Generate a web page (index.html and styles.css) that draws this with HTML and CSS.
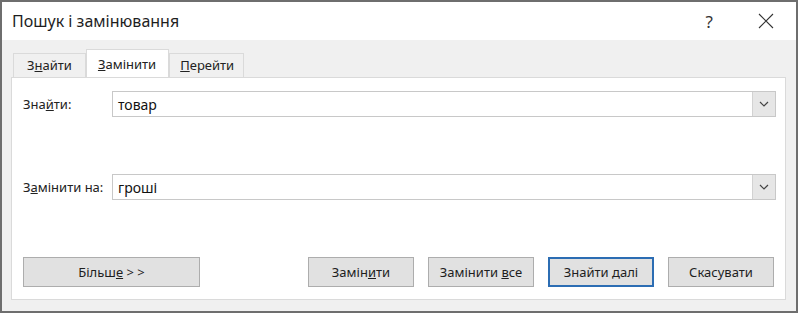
FILE: index.html
```html
<!DOCTYPE html>
<html lang="uk">
<head>
  <meta charset="UTF-8">
  <title>Пошук і замінювання</title>
  <link rel="stylesheet" href="styles.css">
</head>
<body>
  <div class="window">
    <!-- title bar -->
    <div class="titlebar">
      <div class="title">Пошук і замінювання</div>
      <div class="title-actions">
        <span class="help">?</span>
        <svg class="close" width="16" height="16" viewBox="0 0 16 16">
          <path d="M1 1 L15 15 M15 1 L1 15" stroke="#333" stroke-width="1.1" fill="none"/>
        </svg>
      </div>
    </div>

    <div class="content">
      <!-- tabs -->
      <div class="tabs">
        <div class="tab">З<u>н</u>айти</div>
        <div class="tab active"><u>З</u>амінити</div>
        <div class="tab"><u>П</u>ерейти</div>
      </div>

      <div class="panel">
        <div class="field">
          <label class="field-label">Зна<u>й</u>ти:</label>
          <div class="combo">
            <span class="combo-text">товар</span>
            <span class="combo-btn">
              <svg width="10" height="6" viewBox="0 0 10 6"><path d="M1 1 L5 5 L9 1" stroke="#444" stroke-width="1.2" fill="none"/></svg>
            </span>
          </div>
        </div>

        <div class="field">
          <label class="field-label">З<u>а</u>мінити на:</label>
          <div class="combo">
            <span class="combo-text">гроші</span>
            <span class="combo-btn">
              <svg width="10" height="6" viewBox="0 0 10 6"><path d="M1 1 L5 5 L9 1" stroke="#444" stroke-width="1.2" fill="none"/></svg>
            </span>
          </div>
        </div>

        <div class="buttons">
          <button class="btn btn-more">Більш<u>е</u> &gt; &gt;</button>
          <div class="btn-group">
            <button class="btn">Замін<u>и</u>ти</button>
            <button class="btn">Замінити <u>в</u>се</button>
            <button class="btn btn-default">Знайти <u>д</u>алі</button>
            <button class="btn">Скасувати</button>
          </div>
        </div>
      </div>
    </div>
  </div>
</body>
</html>
```

FILE: styles.css
```css
* {
  box-sizing: border-box;
}

body {
  margin: 0;
  font-family: "Noto Sans", "Open Sans", sans-serif;
  color: #222;
  background: #fff;
}

.window {
  width: 798px;
  height: 313px;
  border: 2px solid #6e6e6e;
  display: flex;
  flex-direction: column;
  background: #f0f0f0;
}

.titlebar {
  height: 38px;
  background: #fff;
  display: flex;
  align-items: center;
  justify-content: space-between;
  padding: 0 22px 0 10px;
}

.title {
  font-size: 16px;
  color: #1e1e1e;
}

.title-actions {
  display: flex;
  align-items: center;
  gap: 45px;
}

.help {
  font-size: 17px;
  color: #333;
}

.close {
  display: block;
}

.content {
  flex: 1;
  display: flex;
  flex-direction: column;
  padding: 9px 10px 11px 9px;
}

.tabs {
  display: flex;
  align-items: flex-end;
  padding-left: 2px;
  height: 28px;
}

.tab {
  height: 24px;
  padding: 0 9px 0 10px;
  font-size: 13px;
  line-height: 23px;
  border: 1px solid #dadada;
  border-bottom: none;
  background: #f0f0f0;
  color: #222;
}

.tab:first-child {
  padding: 0 13px 0 13px;
}

.tab.active {
  height: 29px;
  background: #fff;
  line-height: 28px;
  padding: 0 12px 0 11px;
  margin-bottom: -1px;
}

.panel {
  flex: 1;
  background: #fff;
  border: 1px solid #dadada;
  padding: 13px 9px 11px 11px;
  display: flex;
  flex-direction: column;
  gap: 57px;
}

.field {
  display: flex;
  align-items: center;
}

.field-label {
  width: 89px;
  font-size: 13px;
}

.combo {
  flex: 1;
  height: 26px;
  border: 1px solid #c8c8c8;
  display: flex;
  align-items: center;
}

.combo-text {
  flex: 1;
  padding-left: 5px;
  font-size: 14px;
  color: #111;
}

.combo-btn {
  width: 23px;
  height: 24px;
  background: #e6e6e6;
  border-left: 1px solid #d2d2d2;
  display: flex;
  align-items: center;
  justify-content: center;
}

.buttons {
  display: flex;
  justify-content: space-between;
  padding-right: 2px;
}

.btn-group {
  display: flex;
  gap: 14px;
}

.btn {
  width: 106px;
  height: 30px;
  font-family: inherit;
  font-size: 13px;
  color: #1e1e1e;
  background: #e1e1e1;
  border: 1px solid #adadad;
  padding: 0;
}

.btn-more {
  width: 177px;
}

.btn-default {
  border: 2px solid #2c6db3;
}
```
